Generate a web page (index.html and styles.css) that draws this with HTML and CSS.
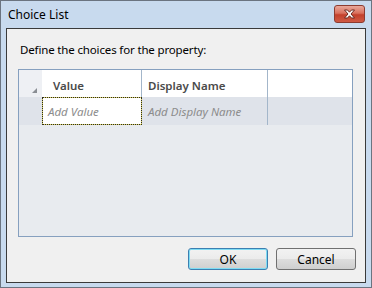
FILE: index.html
```html
<!DOCTYPE html>
<html lang="en">
<head>
  <meta charset="UTF-8" />
  <title>Choice List</title>
  <link rel="stylesheet" href="styles.css">
</head>
<body>
  <div class="window">
    <div class="titlebar">
      <span class="title">Choice List</span>
      <button class="close" type="button">
        <svg width="13" height="10" viewBox="0 0 13 10">
          <path d="M1.5 1 H4.5 L6.5 3.2 L8.5 1 H11.5 L8 5 L11.5 9 H8.5 L6.5 6.8 L4.5 9 H1.5 L5 5 Z"
                fill="#fff" stroke="#6b2a22" stroke-width="1" stroke-linejoin="round"/>
        </svg>
      </button>
    </div>

    <div class="client">
      <p class="prompt">Define the choices for the property:</p>

      <div class="grid">
        <div class="row head">
          <div class="cell corner"><span class="tri"></span></div>
          <div class="cell col-value">Value</div>
          <div class="cell col-display">Display Name</div>
          <div class="cell col-fill"></div>
        </div>
        <div class="row new">
          <div class="cell rowhead"></div>
          <div class="cell col-value focus">Add Value</div>
          <div class="cell col-display">Add Display Name</div>
          <div class="cell col-fill"></div>
        </div>
      </div>

      <div class="actions">
        <button class="btn default" type="button">OK</button>
        <button class="btn" type="button">Cancel</button>
      </div>
    </div>
  </div>
</body>
</html>
```

FILE: styles.css
```css
body {
  margin: 0;
  font-family: "Noto Sans", "Open Sans", sans-serif;
  font-size: 12px;
}
.window {
  width: 372px;
  height: 288px;
  box-sizing: border-box;
  border: 1px solid #6b7480;
  background: #c8daee;
  padding: 0 5px 4px 5px;
  display: flex;
  flex-direction: column;
}
.titlebar {
  height: 27px;
  display: flex;
  align-items: flex-start;
  justify-content: space-between;
}
.title {
  margin: 6px 0 0 2px;
  line-height: 16px;
  color: #000;
}
.close {
  margin: 4px 1px 0 0;
  width: 31px;
  height: 18px;
  padding: 0;
  border: 1px solid #8c3b30;
  border-radius: 3px;
  background: linear-gradient(#e9a89b, #d9705d 45%, #c3402c 55%, #cf5a44);
  display: flex;
  align-items: center;
  justify-content: center;
}
.client {
  flex: 1;
  border: 1px solid #3a3a3a;
  background: #f0f0f0;
  padding: 13px 0 0 0;
  display: flex;
  flex-direction: column;
}
.prompt {
  margin: 0 0 11px 13px;
  line-height: 16px;
  font-size: 11.5px;
  letter-spacing: -0.15px;
  color: #000;
}
.grid {
  margin-left: 11px;
  width: 335px;
  height: 168px;
  box-sizing: border-box;
  border: 1px solid #86a0bf;
  background: #e8ebef;
  font-size: 11.5px;
}
.row {
  display: flex;
}
.row.head {
  height: 27px;
  background: #fff;
}
.row.new {
  height: 28px;
  background: #dfe3ea;
}
.cell {
  box-sizing: border-box;
  display: flex;
  align-items: center;
  padding-left: 10px;
}
.corner,
.rowhead {
  width: 23px;
  padding: 0;
}
.corner {
  background: #eef0f4;
  position: relative;
}
.tri {
  position: absolute;
  right: 5px;
  bottom: 4px;
  width: 0;
  height: 0;
  border-left: 5px solid transparent;
  border-bottom: 5px solid #8a8e94;
}
.col-value {
  width: 100px;
  border-right: 1px solid #a3b6ca;
}
.col-display {
  width: 126px;
  border-right: 1px solid #a3b6ca;
  padding-left: 6px;
}
.col-fill {
  flex: 1;
}
.head .cell {
  font-weight: 600;
  color: #4a4a4a;
  padding-top: 3px;
}
.head .col-value {
  padding-left: 11px;
}
.new .cell {
  font-style: italic;
  color: #8c8c8c;
  padding-top: 1px;
}
.new .focus {
  border: 1px dotted #2e2e1c;
  background: linear-gradient(#fff, #fff) padding-box, #d6cc62 border-box;
  padding-left: 5px;
}
.actions {
  display: flex;
  justify-content: flex-end;
  gap: 8px;
  margin: 11px 9px 0 0;
}
.btn {
  width: 80px;
  height: 22px;
  font-family: "Noto Sans", "Open Sans", sans-serif;
  font-size: 12px;
  color: #000;
  border: 1px solid #707070;
  border-radius: 3px;
  background: linear-gradient(#f2f2f2, #ebebeb 50%, #dddddd 51%, #cfcfcf);
  padding: 0;
}
.btn.default {
  border-color: #3c7fb1;
  box-shadow: inset 0 0 0 1px #7fdcf3;
}
```
